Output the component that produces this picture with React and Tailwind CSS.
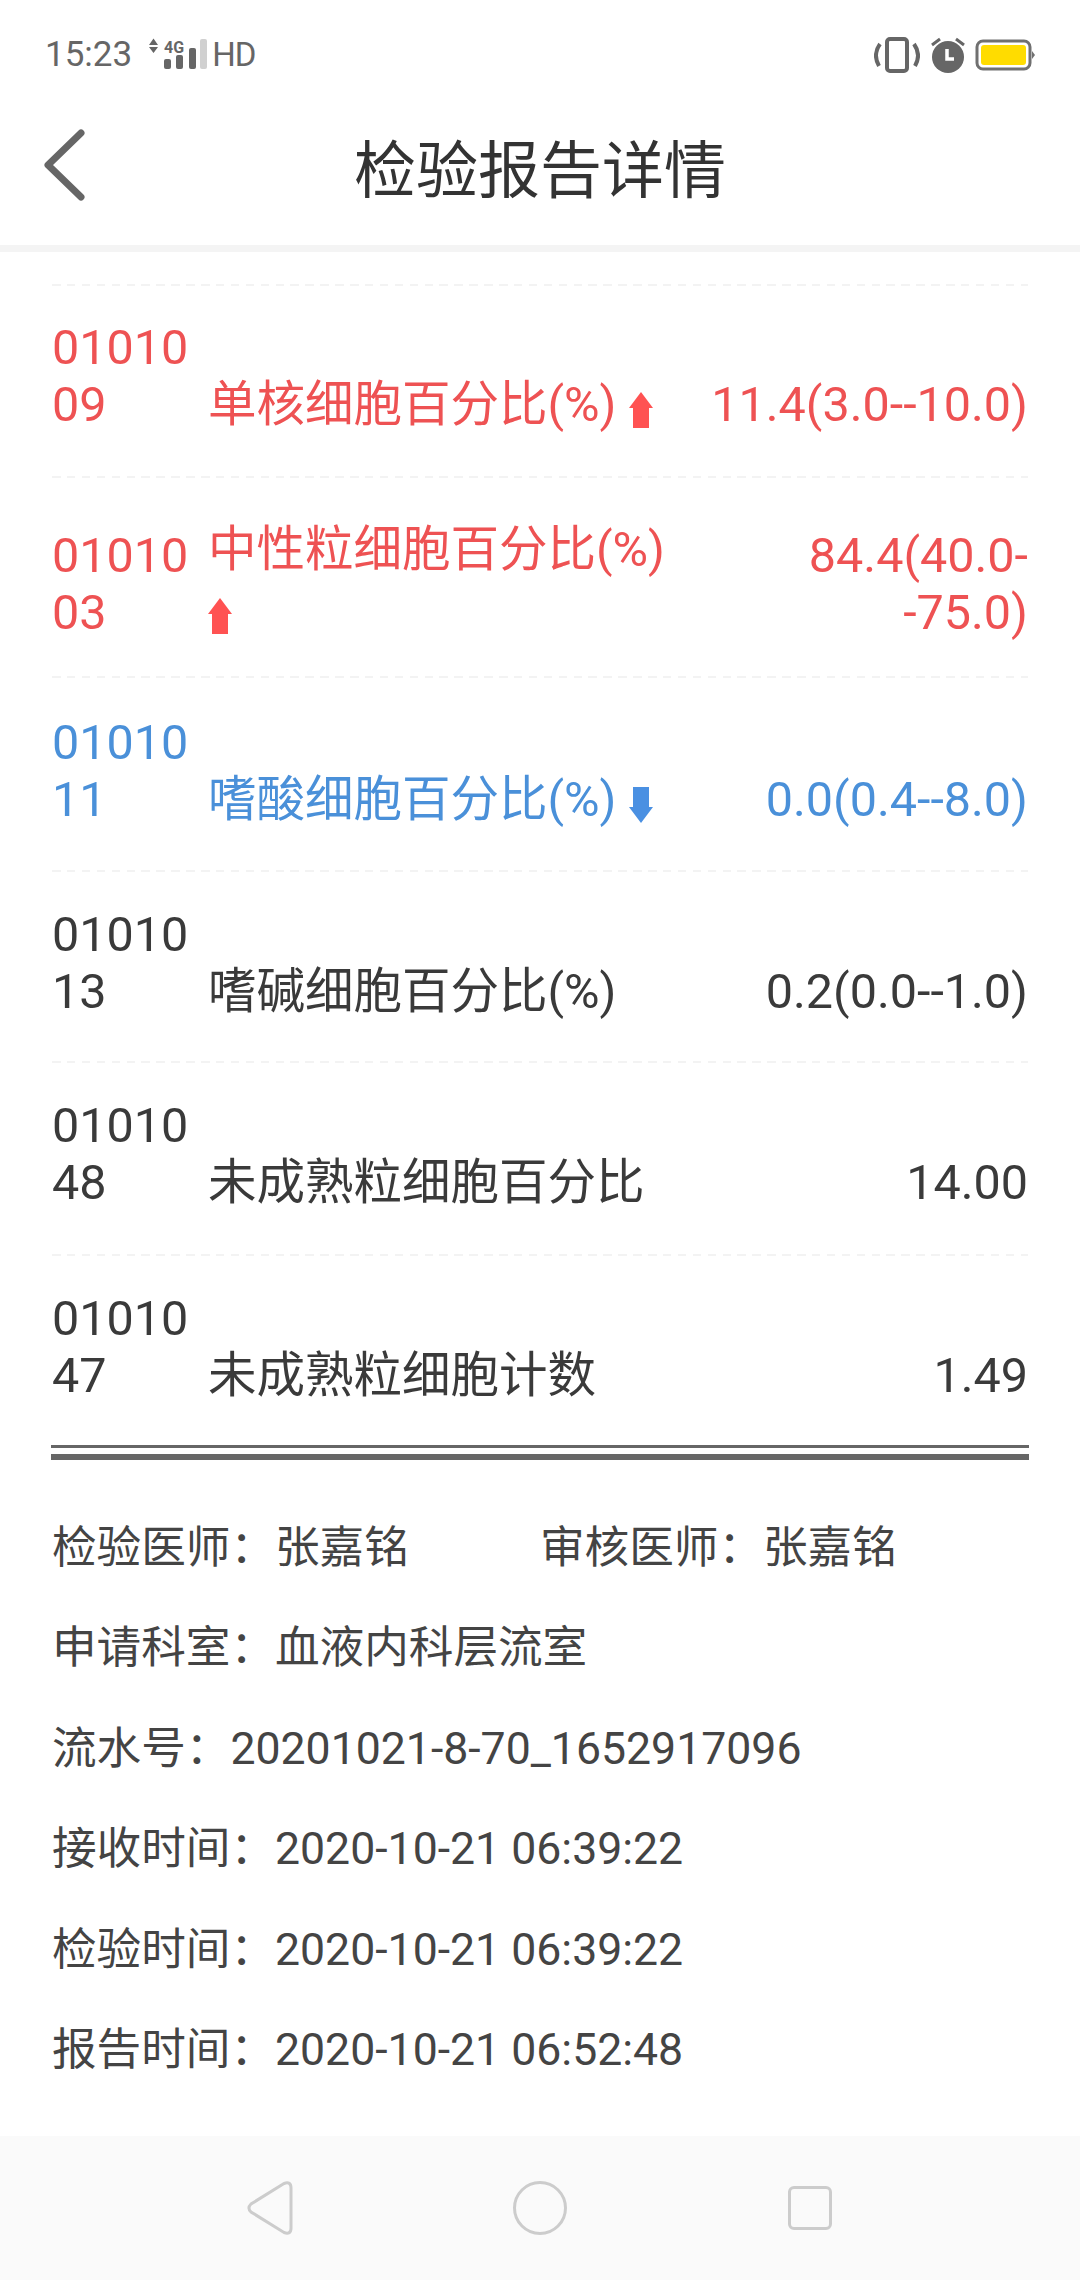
import React from 'react';

const FONT = "font-['Roboto','Noto_Sans_CJK_SC',sans-serif]";

// --- Data ---
const results = [
  { code: '0101009', name: '单核细胞百分比(%)', value: '11.4(3.0--10.0)', tone: 'high', box: 'h-[192px] pb-[43px]' },
  { code: '0101003', name: '中性粒细胞百分比(%)', value: '84.4(40.0--75.0)', tone: 'high', box: 'h-[200px] pb-[35px]', wrap: true },
  { code: '0101011', name: '嗜酸细胞百分比(%)', value: '0.0(0.4--8.0)', tone: 'low', box: 'h-[194px] pb-[42px]' },
  { code: '0101013', name: '嗜碱细胞百分比(%)', value: '0.2(0.0--1.0)', box: 'h-[191px] pb-[41px]' },
  { code: '0101048', name: '未成熟粒细胞百分比', value: '14.00', box: 'h-[193px] pb-[43px]' },
  { code: '0101047', name: '未成熟粒细胞计数', value: '1.49', box: 'h-[191px] pb-[41px]' },
];

const toneClass = { high: 'text-[#ee5253]', low: 'text-[#4a90d9]' };

function Arrow({ up, className }) {
  return (
    <svg width="24" height="36" viewBox="0 0 24 36" className={className}>
      <path
        d={up ? 'M12 0 L24 16 H20 V36 H4 V16 H0 Z' : 'M12 36 L24 20 H20 V0 H4 V20 H0 Z'}
        fill={up ? '#ff5252' : '#4a90e2'}
      />
    </svg>
  );
}

function StatusBar() {
  return (
    <div className="h-[75px] flex items-center justify-between pl-[45px] pr-[45px] pt-[34px] text-[#666]">
      <div className="flex items-center">
        <span className="text-[35px] leading-[40px]">15:23</span>
        <svg width="62" height="34" viewBox="0 0 62 34" className="ml-[14px]">
          <path d="M3 7 L7.5 0.5 L12 7 Z M3 9 L12 9 L7.5 15 Z" fill="#666" />
          <text x="18" y="14.5" fontSize="16" fontWeight="700" fill="#666" fontFamily="Roboto">4G</text>
          <rect x="18" y="21" width="7" height="10" rx="2" fill="#666" />
          <rect x="30" y="17" width="7" height="14" rx="2" fill="#666" />
          <rect x="43" y="10" width="7" height="21" rx="2" fill="#666" />
          <rect x="54" y="1" width="7" height="30" rx="2" fill="#d0d0d0" />
        </svg>
        <span className="text-[33px] leading-[40px] tracking-[-1px] ml-[4px]">HD</span>
      </div>
      <div className="flex items-center">
        <svg width="46" height="36" viewBox="0 0 46 36">
          <rect x="13" y="2" width="20" height="32" rx="3" fill="none" stroke="#666" strokeWidth="4" />
          <path d="M6 7 C1 14 1 22 5 29 M40 7 C45 14 45 22 41 29" fill="none" stroke="#666" strokeWidth="4" />
        </svg>
        <svg width="38" height="38" viewBox="0 0 38 38" className="ml-[9px]">
          <circle cx="19" cy="21" r="16" fill="#666" />
          <path d="M18 13 V23 H25" fill="none" stroke="#fff" strokeWidth="3.5" />
          <path d="M3 9 L11 3 M35 9 L27 3" stroke="#666" strokeWidth="3" />
        </svg>
        <svg width="60" height="34" viewBox="0 0 60 34" className="ml-[8px]">
          <rect x="2" y="3" width="53" height="28" rx="6" fill="none" stroke="#707070" strokeWidth="3" />
          <rect x="6" y="7" width="45" height="20" rx="3" fill="#ffdc00" />
          <path d="M57 13 L60 17 L57 21 Z" fill="#707070" />
        </svg>
      </div>
    </div>
  );
}

function Header() {
  return (
    <header className="h-[177px] pt-[24px] flex items-center justify-center relative border-b-[7px] border-[#f4f4f4]">
      <svg width="44" height="72" viewBox="0 0 44 72" className="absolute left-[42px] top-[54px]">
        <path d="M39 4 L6 36 L39 68" fill="none" stroke="#666" strokeWidth="7" strokeLinecap="round" strokeLinejoin="round" />
      </svg>
      <h1 className="text-[62px] leading-none text-[#333] font-normal">检验报告详情</h1>
    </header>
  );
}

function ResultRow({ item }) {
  const color = toneClass[item.tone] || 'text-[#3a3a3a]';
  const up = item.tone === 'high';
  return (
    <div className={`flex items-end justify-between bg-[repeating-linear-gradient(90deg,#f3f3f3_0,#f3f3f3_8.5px,transparent_8.5px,transparent_14.9px)] bg-[length:100%_2px] bg-no-repeat text-[48.5px] leading-[57px] ${item.box} ${color}`}>
      <div className="w-[156px] shrink-0 break-all pr-[10px]">{item.code}</div>
      <div className="flex-1 min-w-0">
        {item.wrap ? (
          <>
            <div>{item.name}</div>
            <Arrow up={up} className="block mt-[20px] mb-[7px]" />
          </>
        ) : (
          <>
            {item.name}
            {item.tone && <Arrow up={up} className="inline-block ml-[12px] align-[-7px]" />}
          </>
        )}
      </div>
      <div className={`shrink-0 text-right ${item.wrap ? 'w-[226px] break-all' : ''}`}>{item.value}</div>
    </div>
  );
}

function Field({ label, children }) {
  return (
    <div className="h-[100.5px] flex items-center whitespace-nowrap">
      {label}：<span>{children}</span>
    </div>
  );
}

export default function App() {
  return (
    <div className={`w-[1080px] h-[2280px] bg-white flex flex-col overflow-hidden ${FONT}`}>
      <StatusBar />
      <Header />
      <main className="flex-1 px-[52px] pt-[32px]">
        {results.map((r) => (
          <ResultRow key={r.code} item={r} />
        ))}
        <div className="h-[15px] -mx-px border-t-[3px] border-b-[6px] border-[#666]" />
        <div className="pt-[38px] text-[44.6px] text-[#444]">
          <div className="grid grid-cols-2">
            <Field label="检验医师">张嘉铭</Field>
            <Field label="审核医师">张嘉铭</Field>
          </div>
          <Field label="申请科室">血液内科层流室</Field>
          <Field label="流水号">20201021-8-70_1652917096</Field>
          <Field label="接收时间">2020-10-21 06:39:22</Field>
          <Field label="检验时间">2020-10-21 06:39:22</Field>
          <Field label="报告时间">2020-10-21 06:52:48</Field>
        </div>
      </main>
      <nav className="h-[144px] px-[135px] bg-[#fafafa] flex items-center">
        <div className="flex-1 flex justify-center">
          <svg width="46" height="54" viewBox="0 0 46 54">
            <path d="M37 2.5 L4 23 Q0 27 4 31 L37 51.5 Q44 54 44 47 V7 Q44 0 37 2.5 Z" fill="none" stroke="#ccc" strokeWidth="3" />
          </svg>
        </div>
        <div className="flex-1 flex justify-center">
          <div className="w-[54px] h-[54px] rounded-full border-[3px] border-[#ccc]" />
        </div>
        <div className="flex-1 flex justify-center">
          <div className="w-[44px] h-[44px] rounded-[6px] border-[3px] border-[#ccc]" />
        </div>
      </nav>
    </div>
  );
}
